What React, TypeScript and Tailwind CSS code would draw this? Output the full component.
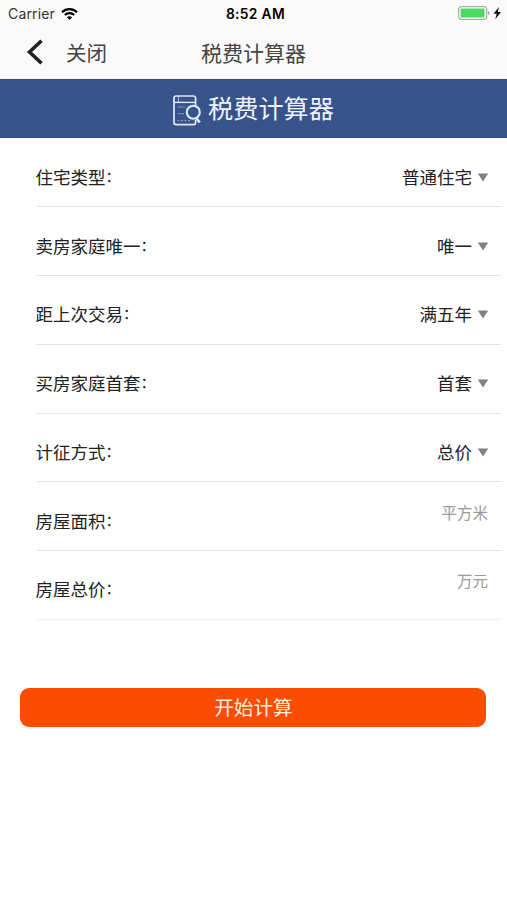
const selectRows = [
  { label: '住宅类型', value: '普通住宅' },
  { label: '卖房家庭唯一', value: '唯一' },
  { label: '距上次交易', value: '满五年' },
  { label: '买房家庭首套', value: '首套' },
  { label: '计征方式', value: '总价' }
]

const inputRows = [
  { label: '房屋面积', unit: '平方米' },
  { label: '房屋总价', unit: '万元' }
]

function StatusBar() {
  return (
    <div className="grid h-7 grid-cols-3 items-center pl-2 pr-[5px] font-['Inter','Liberation_Sans',sans-serif] text-black">
      <div className="flex items-center gap-[6px]">
        <span className="text-[14px] leading-7 tracking-[0.15px] text-[#333]">Carrier</span>
        <svg className="-mt-px" width="17" height="12" viewBox="0 0 17 12" fill="none" stroke="#000" strokeWidth="2.1">
          <path d="M1 4.3C5.2 0.1 11.8 0.1 16 4.3" />
          <path d="M3.8 7.1C6.4 4.5 10.6 4.5 13.2 7.1" />
          <path d="M8.5 12L5.9 9.3C7.4 7.9 9.6 7.9 11.1 9.3Z" fill="#000" stroke="none" />
        </svg>
      </div>
      <span className="ml-px text-center text-[13.8px] font-semibold leading-7 tracking-[0.35px]">8:52 AM</span>
      <div className="flex items-center justify-end">
        <svg className="-mt-[2px]" width="44" height="14" viewBox="0 0 44 14">
          <rect x="0.7" y="0.7" width="28" height="12.6" rx="2.8" fill="#fff" stroke="#aaa" strokeWidth="1.2" />
          <rect x="2.6" y="2.6" width="24" height="8.8" rx="0.8" fill="#4cd964" />
          <path d="M30 5C32.2 5.6 32.2 8.4 30 9Z" fill="#aaa" />
          <path d="M41 1L35.6 7.7H38.8L37.2 13.2L43 6H39.7Z" fill="#000" />
        </svg>
      </div>
    </div>
  )
}

function NavBar() {
  return (
    <div className="grid h-[51px] grid-cols-[1fr_auto_1fr] items-center pb-1 pl-[26px] text-[#444]">
      <button className="flex items-center gap-[22px]">
        <svg width="18" height="26" viewBox="0 0 18 26" fill="none" stroke="#222" strokeWidth="3.6">
          <path d="M15.5 1.8L3.5 13L15.5 24.2" />
        </svg>
        <span className="text-[20.5px] leading-6">关闭</span>
      </button>
      <h1 className="-ml-[26px] text-[21px] leading-6">税费计算器</h1>
    </div>
  )
}

function CalculatorIcon() {
  return (
    <svg className="mt-[3px]" width="29" height="31" viewBox="0 0 29 31" fill="none" stroke="#e2e9fb" strokeWidth="1.7">
      <path d="M22.6 10V3.2C22.6 1.8 21.8 1 20.4 1H3.2C1.8 1 1 1.8 1 3.2V27.4C1 28.8 1.8 29.6 3.2 29.6H20.4C21.8 29.6 22.6 28.8 22.6 27.4V25" />
      <path d="M1 7.4H22.6" strokeWidth="1.4" />
      <path d="M5.5 1.5V7" strokeWidth="1" opacity="0.7" />
      <path d="M4.5 12H12M4.5 18.7H11" strokeWidth="1" opacity="0.45" />
      <path d="M4.5 25.6H18" strokeWidth="1.2" strokeDasharray="2 1.5" opacity="0.5" />
      <circle cx="20.3" cy="17.2" r="6.5" strokeWidth="2.1" />
      <path d="M23.2 22.8L26.7 27.5" strokeWidth="2.6" />
    </svg>
  )
}

export default function App() {
  return (
    <div className="h-[900px] w-[507px] overflow-hidden bg-white font-['Noto_Sans_CJK_SC',sans-serif]">
      <header className="bg-[#fafafa]">
        <StatusBar />
        <NavBar />
      </header>

      <div className="flex h-[58.5px] items-center justify-center gap-1.5 border-t border-[#2d4677] bg-[#385389]">
        <CalculatorIcon />
        <h2 className="-mt-[3px] text-[25.2px] leading-[56px] text-[#eef2ff]">税费计算器</h2>
      </div>

      <div className="ml-9 mr-1.5 pt-px text-[17.5px] leading-6 text-[#222]">
        {selectRows.map(row => (
          <div key={row.label} className="flex h-[68.8px] items-center justify-between border-b border-[#e4e4e4] pt-[9px] pr-3">
            <div className="-ml-[0.5px] flex">
              <span>{row.label}</span>
              <span className="-mt-px text-[15px]">：</span>
            </div>
            <div className="flex items-center gap-[5px]">
              <span>{row.value}</span>
              <svg className="mt-px" width="12" height="9" viewBox="0 0 12 9">
                <path d="M0.8 0.5H11.2L6 8.5Z" fill="#808080" />
              </svg>
            </div>
          </div>
        ))}
        {inputRows.map(row => (
          <div key={row.label} className="flex h-[68.8px] items-center justify-between border-b border-[#e4e4e4] pt-[9px] pr-[13px] last:h-[70px] last:border-b-[3px] last:border-[#f6f6f6]">
            <div className="-ml-[0.5px] flex">
              <span>{row.label}</span>
              <span className="-mt-px text-[15px]">：</span>
            </div>
            <span className="pb-[18px] text-[15.5px] text-[#999]">{row.unit}</span>
          </div>
        ))}
      </div>

      <button className="ml-[20.4px] mt-[66.5px] flex h-[39px] w-[466px] items-center justify-center rounded-[9px] bg-[#fb4c00] pb-0.5 text-[19.6px] text-[#fff0e8]">
        开始计算
      </button>
    </div>
  )
}
